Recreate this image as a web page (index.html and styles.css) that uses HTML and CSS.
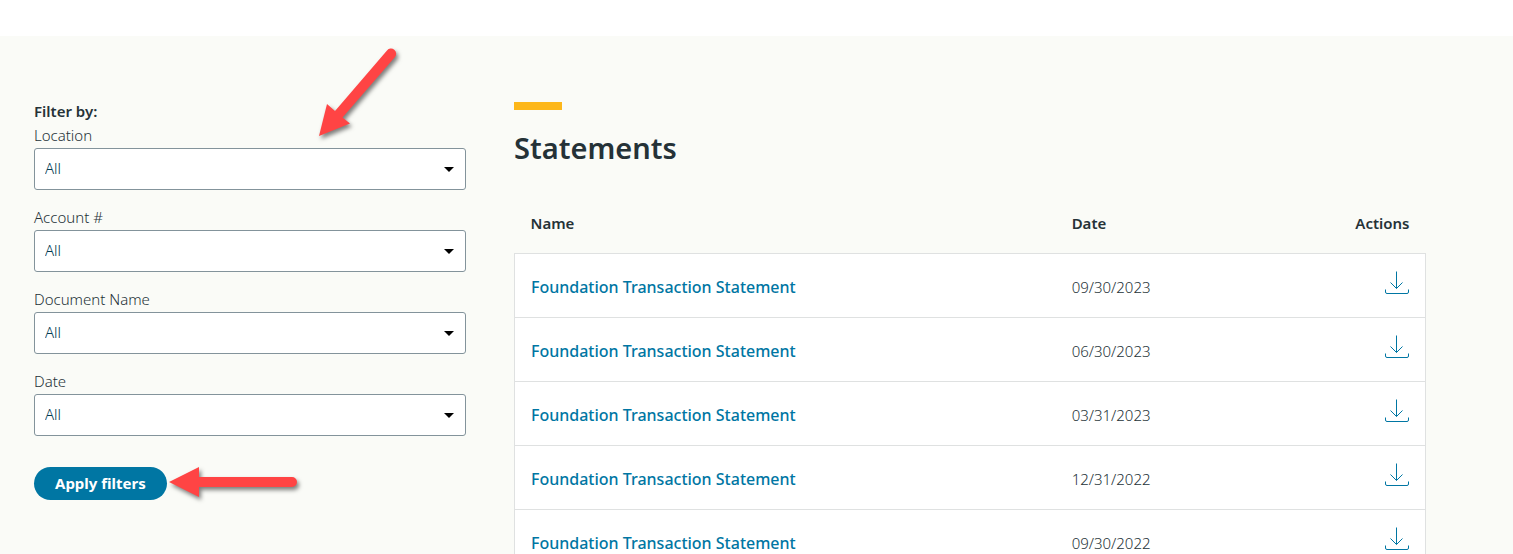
FILE: index.html
```
<!DOCTYPE html>
<html lang="en">

<head>
    <meta charset="UTF-8" />
    <meta name="viewport" content="width=device-width, initial-scale=1.0" />
    <title>Statements</title>
    <link rel="stylesheet" href="styles.css">
</head>

<body>

    <!-- Shared download icon -->
    <svg class="sprite" aria-hidden="true">
        <symbol id="icon-download" viewBox="0 0 24 24">
            <path d="M11.5 0.5V17.5M5.5 11.5L11.5 17.5L17.5 11.5" />
            <path d="M0.5 18.5V21Q0.5 22.5 2 22.5H22Q23.5 22.5 23.5 21V18.5" />
        </symbol>
    </svg>

    <header class="topbar"></header>

    <main class="page">

        <!-- Filters -->
        <form class="filters">
            <h2 class="filters-title">Filter by:</h2>

            <div class="field">
                <label for="location">Location</label>
                <select id="location">
                    <option>All</option>
                </select>
                <svg class="arrow arrow-location" width="88" height="100" viewBox="0 0 88 100" aria-hidden="true">
                    <path d="M4 88L12 56L20 63L72 2.5A5 5 0 0 1 80 9L27.5 69.5L35 75.5Z" />
                </svg>
            </div>

            <div class="field">
                <label for="account">Account #</label>
                <select id="account">
                    <option>All</option>
                </select>
            </div>

            <div class="field">
                <label for="document-name">Document Name</label>
                <select id="document-name">
                    <option>All</option>
                </select>
            </div>

            <div class="field">
                <label for="date">Date</label>
                <select id="date">
                    <option>All</option>
                </select>
            </div>

            <div class="apply">
                <button type="button" class="apply-button">Apply filters</button>
                <svg class="arrow arrow-apply" width="136" height="40" viewBox="0 0 136 40" aria-hidden="true">
                    <path d="M1 15L31 0V10H124A5 5 0 0 1 124 20H31V30Z" />
                </svg>
            </div>
        </form>

        <!-- Statements list -->
        <section class="statements">
            <h1 class="statements-title">Statements</h1>

            <table class="statements-table">
                <thead>
                    <tr>
                        <th class="col-name" scope="col">Name</th>
                        <th class="col-date" scope="col">Date</th>
                        <th class="col-actions" scope="col">Actions</th>
                    </tr>
                </thead>
                <tbody>
                    <tr>
                        <td><a href="#">Foundation Transaction Statement</a></td>
                        <td>09/30/2023</td>
                        <td class="col-actions"><a href="#" aria-label="Download"><svg class="icon"><use href="#icon-download" /></svg></a></td>
                    </tr>
                    <tr>
                        <td><a href="#">Foundation Transaction Statement</a></td>
                        <td>06/30/2023</td>
                        <td class="col-actions"><a href="#" aria-label="Download"><svg class="icon"><use href="#icon-download" /></svg></a></td>
                    </tr>
                    <tr>
                        <td><a href="#">Foundation Transaction Statement</a></td>
                        <td>03/31/2023</td>
                        <td class="col-actions"><a href="#" aria-label="Download"><svg class="icon"><use href="#icon-download" /></svg></a></td>
                    </tr>
                    <tr>
                        <td><a href="#">Foundation Transaction Statement</a></td>
                        <td>12/31/2022</td>
                        <td class="col-actions"><a href="#" aria-label="Download"><svg class="icon"><use href="#icon-download" /></svg></a></td>
                    </tr>
                    <tr>
                        <td><a href="#">Foundation Transaction Statement</a></td>
                        <td>09/30/2022</td>
                        <td class="col-actions"><a href="#" aria-label="Download"><svg class="icon"><use href="#icon-download" /></svg></a></td>
                    </tr>
                </tbody>
            </table>
        </section>

    </main>

</body>

</html>
```
FILE: styles.css
```
* {
    box-sizing: border-box;
}

body {
    margin: 0;
    font-family: "Noto Sans", "Open Sans", sans-serif;
    font-size: 15px;
    font-weight: 300;
    line-height: 24px;
    color: #253237;
    background-color: #fafbf7;
}

.sprite {
    display: none;
}

.topbar {
    height: 36px;
    background-color: #fff;
}

.page {
    display: grid;
    grid-template-columns: 9fr 19fr;
    gap: 48px;
    padding: 64px 87px 0 34px;
}

/* Filters */
.filters-title {
    margin: 0 0 2px;
    font-size: 15px;
    font-weight: 600;
    line-height: 22px;
}

.field {
    position: relative;
    margin-bottom: 16px;
}

.field label {
    display: block;
    padding-bottom: 2px;
    line-height: 22px;
}

.field select {
    display: block;
    width: 100%;
    height: 42px;
    padding: 0 10px 2px;
    border: 1px solid #83939b;
    border-radius: 3px;
    appearance: none;
    font: inherit;
    color: #003b52;
    background: #fff url("data:image/svg+xml,%3Csvg xmlns='http://www.w3.org/2000/svg' width='10' height='5'%3E%3Cpath d='M0 0H10L5 5Z'/%3E%3C/svg%3E") no-repeat right 11px center;
}

.apply {
    position: relative;
    display: flex;
    padding-top: 15px;
}

.apply-button {
    height: 33px;
    padding: 0 21px 2px;
    border: none;
    border-radius: 17px;
    font: inherit;
    font-weight: 700;
    color: #fff;
    background-color: #0076a3;
    cursor: pointer;
}

/* Red pointers drawn over the form */
.arrow {
    position: absolute;
    overflow: visible;
    fill: #ff4444;
    filter: drop-shadow(2px 3px 2px rgba(0, 0, 0, 0.5));
    pointer-events: none;
}

.arrow-location {
    left: 281px;
    top: -76px;
}

.arrow-apply {
    left: 134px;
    top: 15px;
}

/* Statements */
.statements {
    padding-top: 2px;
}

.statements-title {
    margin: 0;
    font-size: 29px;
    font-weight: 600;
    line-height: 40px;
}

.statements-title::before {
    content: "";
    display: block;
    width: 48px;
    height: 8px;
    margin-bottom: 18px;
    background-color: #fdb71a;
}

.statements-table {
    width: 100%;
    margin-top: 26px;
    border-collapse: collapse;
    table-layout: fixed;
}

.statements-table th {
    height: 59px;
    padding: 0 16px;
    font-weight: 600;
    text-align: left;
}

.statements-table td {
    height: 64px;
    padding: 4px 16px 0;
    border-top: 1px solid #dfe1e1;
    border-bottom: 1px solid #dfe1e1;
}

.statements-table tbody {
    border: 1px solid #dfe1e1;
    background-color: #fff;
}

.statements-table a {
    font-size: 16px;
    font-weight: 500;
    color: #0076a3;
    text-decoration: none;
}

.statements-table .col-name {
    width: 59.4%;
}

.statements-table .col-actions {
    text-align: right;
}

.statements-table td.col-actions {
    padding-top: 0;
    padding-bottom: 5px;
}

.icon {
    display: inline-block;
    width: 24px;
    height: 24px;
    vertical-align: middle;
    fill: none;
    stroke: #0076a3;
    stroke-width: 1;
}
```
